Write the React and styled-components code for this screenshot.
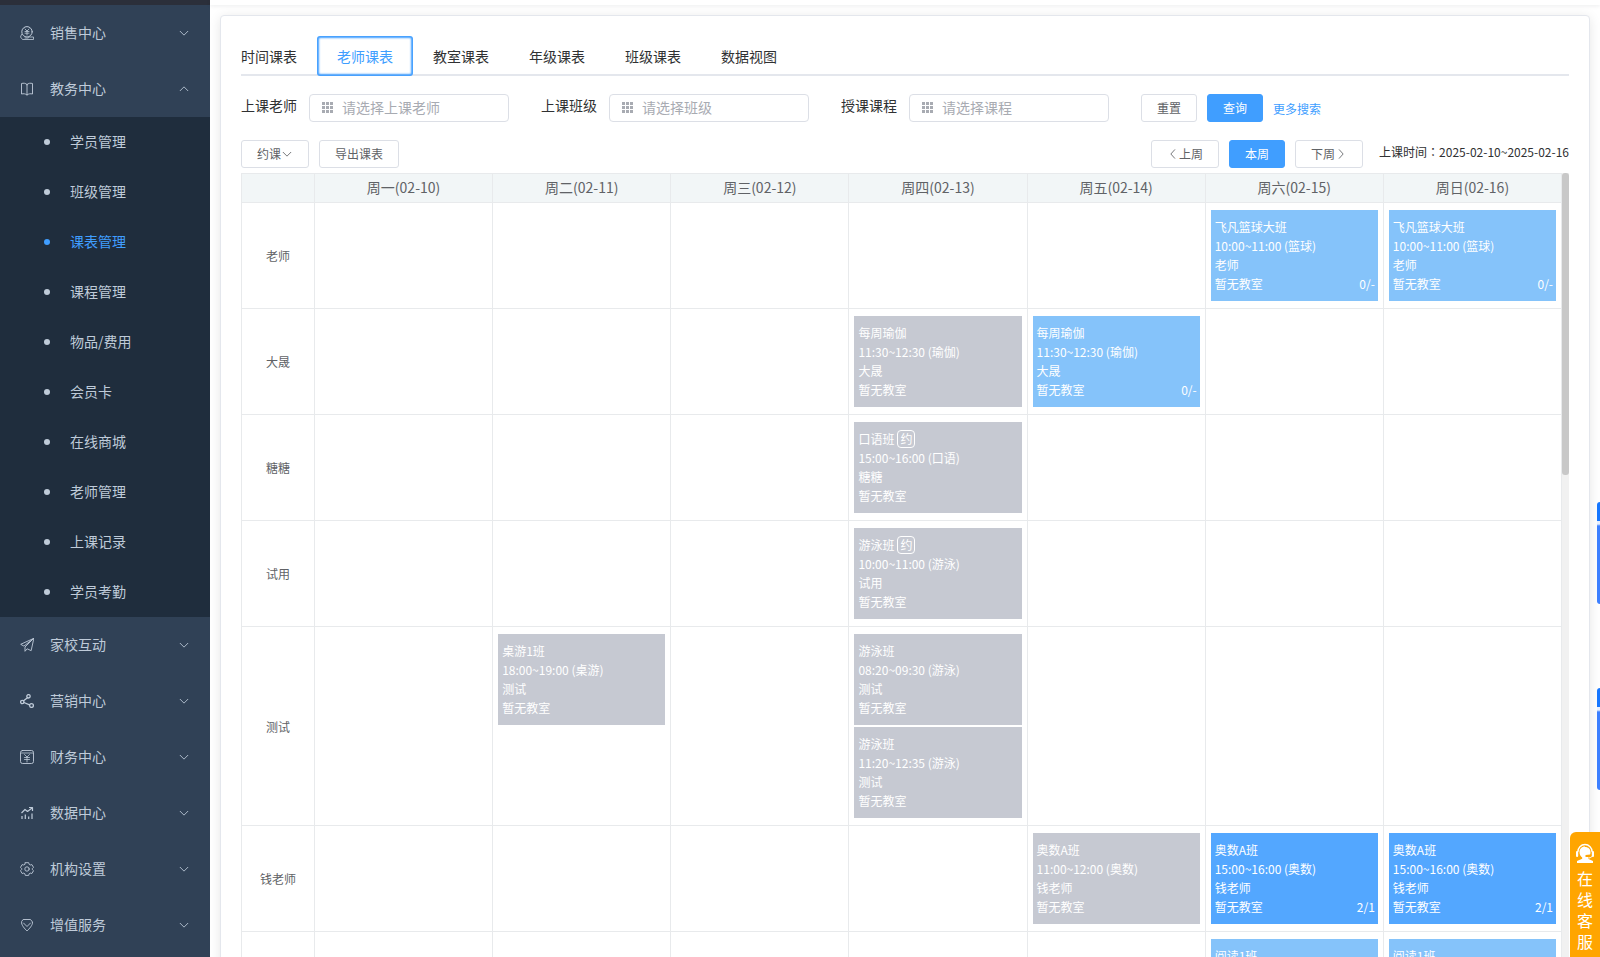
import { useState } from "react";
import styled, { createGlobalStyle, css } from "styled-components";

const GlobalStyle = createGlobalStyle`
  * {
    box-sizing: border-box;
  }
  body {
    margin: 0;
    background: #fff;
    color: #303133;
    font-family: "Noto Sans CJK SC", sans-serif;
    font-size: 14px;
  }
  button, input {
    font: inherit;
  }
`;

const Layout = styled.div`
  display: flex;
  height: 100vh;
  overflow: hidden;
`;

/* sidebar */
const Sidebar = styled.nav`
  flex: 0 0 210px;
  background: #304156;
  border-top: 5px solid #2b2f3a;
  overflow: hidden;
`;
const MenuTitle = styled.button`
  display: flex;
  align-items: center;
  width: 100%;
  height: 56px;
  padding: 0 20px;
  border: 0;
  background: none;
  color: #bfcbd9;
  text-align: left;
  cursor: pointer;
  & > span {
    flex: 1;
    margin-left: 16px;
    padding-bottom: 2px;
  }
`;
const SubMenu = styled.ul`
  margin: 0;
  padding: 0;
  list-style: none;
  background: #1f2d3d;
`;
const SubLink = styled.a`
  display: flex;
  align-items: center;
  gap: 20px;
  height: 50px;
  padding-left: 44px;
  color: ${(p) => (p.$active ? "#409eff" : "#bfcbd9")};
  text-decoration: none;
  &::before {
    content: "";
    width: 6px;
    height: 6px;
    border-radius: 50%;
    background: currentColor;
  }
  & > span {
    padding-bottom: 2px;
  }
`;

/* main */
const Main = styled.main`
  flex: 1;
  min-width: 0;
`;
const Header = styled.header`
  height: 5px;
  background: #fff;
  box-shadow: 0 1px 4px rgba(0, 21, 41, 0.08);
`;
const Card = styled.section`
  margin: 10px 10px 0;
  min-height: 100vh;
  padding: 20px;
  border: 1px solid #e4e7ed;
  border-radius: 4px;
  background: #fff;
  box-shadow: 0 2px 12px rgba(0, 0, 0, 0.1);
`;
const Tabs = styled.div`
  display: flex;
  height: 40px;
  background: linear-gradient(#e4e7ed, #e4e7ed) bottom / 100% 2px no-repeat;
`;
const Tab = styled.button`
  height: 40px;
  padding: 0 20px;
  border: 0;
  background: none;
  color: #303133;
  line-height: 40px;
  cursor: pointer;
  &:first-child {
    padding-left: 0;
  }
  ${(p) =>
    p.$active &&
    css`
      color: #409eff;
      border-radius: 3px;
      box-shadow: inset 0 0 2px 2px #409eff;
    `}
`;
const Filters = styled.form`
  display: flex;
  gap: 32px;
  margin-top: 18px;
`;
const Field = styled.div`
  display: flex;
`;
const FieldLabel = styled.label`
  width: 68px;
  line-height: 22px;
`;
const InputBox = styled.div`
  display: flex;
  align-items: center;
  gap: 8px;
  width: 200px;
  height: 28px;
  padding: 0 11px;
  border: 1px solid #dcdfe6;
  border-radius: 4px;
`;
const Input = styled.input`
  flex: 1;
  min-width: 0;
  padding: 0 0 2px;
  border: 0;
  outline: 0;
  color: #606266;
  &::placeholder {
    color: #a8abb2;
  }
`;
const Actions = styled.div`
  display: flex;
  align-items: center;
  gap: 10px;
`;
const Button = styled.button`
  display: flex;
  align-items: center;
  height: 28px;
  padding: 0 15px;
  border: 1px solid ${(p) => (p.$primary ? "#409eff" : "#dcdfe6")};
  border-radius: 3px;
  background: ${(p) => (p.$primary ? "#409eff" : "#fff")};
  color: ${(p) => (p.$primary ? "#fff" : "#606266")};
  font-size: 12px;
  line-height: 26px;
  white-space: nowrap;
  cursor: pointer;
`;
const MoreLink = styled.a`
  color: #409eff;
  font-size: 12px;
  text-decoration: none;
`;
const Toolbar = styled.div`
  display: flex;
  justify-content: space-between;
  margin: 18px 0 5px;
`;
const DateRange = styled.span`
  align-self: flex-start;
  margin-left: 6px;
  font-size: 12px;
  line-height: 24px;
`;
/* the TC face sets the full-width colon in the middle of its cell */
const Colon = styled.span`
  font-family: "Noto Sans CJK TC", sans-serif;
`;

/* timetable */
const TableWrap = styled.div`
  display: flex;
`;
const Scrollbar = styled.div`
  flex: 0 0 7px;
  background: #f1f1f1;
  &::before {
    content: "";
    display: block;
    height: 302px;
    border-radius: 3px;
    background: #c8c8c8;
  }
`;
const Table = styled.table`
  flex: 1;
  width: 100%;
  border-collapse: collapse;
  table-layout: fixed;
  color: #606266;
  th, td {
    border: 1px solid #e8eaec;
  }
  thead th {
    height: 29px;
    padding: 0 0 2px;
    background: #f2f6f7;
    font-weight: 400;
    line-height: 26px;
  }
  thead th:first-child {
    width: 73px;
  }
  tbody th {
    padding: 0;
    font-size: 12px;
    font-weight: 400;
  }
  td {
    height: 106px;
    padding: 7px 5px;
    vertical-align: top;
  }
`;
const cardColors = {
    past: "#c6c9d2",
    open: "#85c3fa",
    booked: "#53a7ff",
};
const Lesson = styled.div`
  min-height: 91px;
  padding: 7px 3px 8px 4px;
  background: ${(p) => cardColors[p.$status]};
  color: #fff;
  font-size: 12px;
  line-height: 19px;
  & + & {
    margin-top: 2px;
  }
`;
const LessonLine = styled.div`
  display: flex;
  align-items: center;
  height: 19px;
  white-space: nowrap;
`;
const Count = styled.span`
  margin-left: auto;
`;
const BookTag = styled.span`
  width: 18px;
  height: 18px;
  margin-left: 3px;
  border: 1px solid #fff;
  border-radius: 4px;
  line-height: 16px;
  text-align: center;
`;

/* things that stick to the right edge of the window */
const SideHandle = styled.div`
  position: fixed;
  right: 0;
  top: ${(p) => p.$top}px;
  width: 3px;
  height: 102px;
  border-radius: 3px 0 0 3px;
  background: linear-gradient(#1677ff 19px, #e6efff 19px, #e6efff 22px, #3d80ff 24px);
`;
const Service = styled.button`
  position: fixed;
  right: 0;
  top: 832px;
  display: flex;
  flex-direction: column;
  align-items: center;
  width: 30px;
  height: 140px;
  padding: 11px 7px;
  border: 0;
  border-radius: 6px 0 0 6px;
  background: #ffa500;
  color: #fff;
  font-size: 16px;
  line-height: 21px;
  cursor: pointer;
  svg {
    flex: none;
    margin-bottom: 5px;
  }
`;

const Icon = ({ size = 14, children }) => (
    <svg width={size} height={size} viewBox="0 0 14 14" fill="none" stroke="currentColor" strokeLinecap="round" strokeLinejoin="round" aria-hidden="true">
        {children}
    </svg>
);
const arrows = {
    down: "M2.500 5L7 9.500 11.500 5",
    up: "M2.500 9L7 4.500 11.500 9",
    left: "M9 2L4.500 7 9 12",
    right: "M5 2l4.500 5L5 12",
};
const Arrow = ({ dir }) => <Icon size={12}><path d={arrows[dir]} /></Icon>;
const GridIcon = () => (
    <svg width="13" height="12" viewBox="0 0 13 12" fill="#a8abb2" aria-hidden="true">
        {[0, 4, 8].map((y) => [1, 5, 9].map((x) => <rect key={x + "-" + y} x={x} y={y} width="3" height="3" />))}
    </svg>
);
const icons = {
    sales: <><circle cx="7" cy="5.800" r="5.200" /><path d="M5 3l2 2 2-2M7 5v4M5 5.500h4M5 7.200h4M1.500 8.500L.5 11l2 2.500h11v-2.500h-4L8 12H5" strokeWidth=".8" /></>,
    book: <path d="M7 2.500C5.500 1 3.500 1 1.500 1.500v10.500c2-.5 4-.3 5.500 1 1.500-1.300 3.500-1.500 5.500-1V1.500C10.500 1 8.500 1 7 2.500zM7 2.500V13" strokeWidth=".9" />,
    send: <path d="M13.500.5L.7 6.300l3.200 1.800L13.500.5 5 9v4.300l2.200-2.500 3.600 1.700z" strokeWidth=".9" />,
    share: <g strokeWidth="1.300"><circle cx="8.500" cy="2.300" r="1.700" /><circle cx="2.300" cy="8" r="1.700" /><circle cx="11.500" cy="11.500" r="1.900" /><path d="M7.500 3.700L3.600 6.800M4 8.500l5.500 2.300" /></g>,
    finance: <><rect x=".5" y=".5" width="13" height="13" rx="2" strokeWidth=".9" /><path d="M1 3h12M4.500 4.500L7 7l2.500-2.500M7 7v5M4.500 7.500h5M4.500 9.500h5" strokeWidth=".8" /></>,
    chart: <path d="M1.500 7L5 3.500l2.500 2L12 2M9 1.500h3.500V5M2 13v-3M5.300 13V8.500M8.700 13v-2.500M12 13V7.500" strokeLinecap="butt" strokeWidth="1.200" />,
    setting: <><path d="M5.300.7h3.400l.5 1.700 1 .6 1.700-.4 1.600 2.800-1.200 1.200v.9l1.200 1.200-1.600 2.800-1.700-.4-1 .6-.5 1.700H5.300l-.5-1.700-1-.6-1.700.4L.5 8.700l1.200-1.200v-.9L.5 5.400l1.600-2.800 1.700.4 1-.6z" strokeWidth=".9" /><circle cx="7" cy="7" r="2.200" strokeWidth=".9" /></>,
    vip: <><path d="M3.500 1.500h7l2 2.500c.5 3-3.500 7-5.500 9-2-2-6-6-5.500-9z" strokeWidth=".9" /><path d="M3.500 5L7 8.500 10.500 5" strokeWidth=".9" /></>,
};

const subItems = ["学员管理", "班级管理", "课表管理", "课程管理", "物品/费用", "会员卡", "在线商城", "老师管理", "上课记录", "学员考勤"];
const menu = [
    { title: "销售中心", icon: "sales" },
    { title: "教务中心", icon: "book", children: subItems },
    { title: "家校互动", icon: "send" },
    { title: "营销中心", icon: "share" },
    { title: "财务中心", icon: "finance" },
    { title: "数据中心", icon: "chart" },
    { title: "机构设置", icon: "setting" },
    { title: "增值服务", icon: "vip" },
];
const tabs = ["时间课表", "老师课表", "教室课表", "年级课表", "班级课表", "数据视图"];
const filters = [
    { id: "teacher", label: "上课老师", placeholder: "请选择上课老师" },
    { id: "class", label: "上课班级", placeholder: "请选择班级" },
    { id: "course", label: "授课课程", placeholder: "请选择课程" },
];
const days = ["周一(02-10)", "周二(02-11)", "周三(02-12)", "周四(02-13)", "周五(02-14)", "周六(02-15)", "周日(02-16)"];

const basketball = { name: "飞凡篮球大班", time: "10:00~11:00 (篮球)", status: "open", count: "0/-" };
const yoga = { name: "每周瑜伽", time: "11:30~12:30 (瑜伽)" };
const math = { name: "奥数A班", time: "15:00~16:00 (奥数)", status: "booked", count: "2/1" };
const reading = { name: "阅读1班", status: "open" };
// lessons are keyed by the index of the day
const rows = [
    { teacher: "老师", lessons: { 5: [basketball], 6: [basketball] } },
    { teacher: "大晟", lessons: { 3: [{ ...yoga, status: "past" }], 4: [{ ...yoga, status: "open", count: "0/-" }] } },
    { teacher: "糖糖", lessons: { 3: [{ name: "口语班", time: "15:00~16:00 (口语)", status: "past", bookable: true }] } },
    { teacher: "试用", lessons: { 3: [{ name: "游泳班", time: "10:00~11:00 (游泳)", status: "past", bookable: true }] } },
    {
        teacher: "测试",
        lessons: {
            1: [{ name: "桌游1班", time: "18:00~19:00 (桌游)", status: "past" }],
            3: [
                { name: "游泳班", time: "08:20~09:30 (游泳)", status: "past" },
                { name: "游泳班", time: "11:20~12:35 (游泳)", status: "past" },
            ],
        },
    },
    { teacher: "钱老师", lessons: { 4: [{ name: "奥数A班", time: "11:00~12:00 (奥数)", status: "past" }], 5: [math], 6: [math] } },
    { teacher: "", lessons: { 5: [reading], 6: [reading] } },
];

const LessonCard = ({ lesson, teacher }) => (
    <Lesson $status={lesson.status}>
        <LessonLine>
            {lesson.name}
            {lesson.bookable && <BookTag>约</BookTag>}
        </LessonLine>
        {lesson.time && (
            <>
                <LessonLine>{lesson.time}</LessonLine>
                <LessonLine>{teacher}</LessonLine>
                <LessonLine>
                    暂无教室
                    {lesson.count && <Count>{lesson.count}</Count>}
                </LessonLine>
            </>
        )}
    </Lesson>
);

const App = () => {
    const [tab, setTab] = useState("老师课表");
    const [open, setOpen] = useState("教务中心");
    return (
        <Layout>
            <GlobalStyle />
            <Sidebar>
                {menu.map((item) => (
                    <div key={item.title}>
                        <MenuTitle onClick={() => setOpen(open === item.title ? "" : item.title)}>
                            <Icon>{icons[item.icon]}</Icon>
                            <span>{item.title}</span>
                            <Arrow dir={open === item.title && item.children ? "up" : "down"} />
                        </MenuTitle>
                        {item.children && open === item.title && (
                            <SubMenu>
                                {item.children.map((name) => (
                                    <li key={name}>
                                        <SubLink href="#" $active={name === "课表管理"}><span>{name}</span></SubLink>
                                    </li>
                                ))}
                            </SubMenu>
                        )}
                    </div>
                ))}
            </Sidebar>
            <Main>
                <Header />
                <Card>
                    <Tabs>
                        {tabs.map((name) => (
                            <Tab key={name} $active={name === tab} onClick={() => setTab(name)}>{name}</Tab>
                        ))}
                    </Tabs>
                    <Filters onSubmit={(e) => e.preventDefault()}>
                        {filters.map((f) => (
                            <Field key={f.id}>
                                <FieldLabel htmlFor={f.id}>{f.label}</FieldLabel>
                                <InputBox>
                                    <GridIcon />
                                    <Input id={f.id} placeholder={f.placeholder} />
                                </InputBox>
                            </Field>
                        ))}
                        <Actions>
                            <Button type="reset">重置</Button>
                            <Button type="submit" $primary>查询</Button>
                            <MoreLink href="#">更多搜索</MoreLink>
                        </Actions>
                    </Filters>
                    <Toolbar>
                        <Actions>
                            <Button>约课<Arrow dir="down" /></Button>
                            <Button>导出课表</Button>
                        </Actions>
                        <Actions>
                            <Button><Arrow dir="left" />上周</Button>
                            <Button $primary>本周</Button>
                            <Button>下周<Arrow dir="right" /></Button>
                            <DateRange>上课时间<Colon>：</Colon>2025-02-10~2025-02-16</DateRange>
                        </Actions>
                    </Toolbar>
                    <TableWrap>
                        <Table>
                            <thead>
                                <tr>
                                    <th />
                                    {days.map((day) => <th key={day}>{day}</th>)}
                                </tr>
                            </thead>
                            <tbody>
                                {rows.map((row) => (
                                    <tr key={row.teacher}>
                                        <th>{row.teacher}</th>
                                        {days.map((day, i) => (
                                            <td key={day}>
                                                {(row.lessons[i] || []).map((lesson) => (
                                                    <LessonCard key={lesson.name + lesson.time} lesson={lesson} teacher={row.teacher} />
                                                ))}
                                            </td>
                                        ))}
                                    </tr>
                                ))}
                            </tbody>
                        </Table>
                        <Scrollbar />
                    </TableWrap>
                </Card>
            </Main>
            <SideHandle $top={502} />
            <SideHandle $top={688} />
            <Service>
                <svg width="18" height="20" viewBox="0 0 18 20" fill="#fff" aria-hidden="true">
                    <path d="M1.800 9a7.200 7.500 0 0 1 14.400 0" fill="none" stroke="#fff" strokeWidth="1.400" />
                    <rect y="8" width="2.200" height="6" rx="1.100" />
                    <rect x="15.800" y="8" width="2.200" height="6" rx="1.100" />
                    <path d="M9 3.500c-3.500 0-5.500 2.500-5.500 5.500 0 2.500 1 4.500 2.700 5.600v1.200L1 18v2h16v-2l-5-2.200v-1.200l1-.7-3.500.2v-2l4.600-.6c.3-.7.4-1.500.4-2.300 0-3-2-5.200-5.500-5.200z" />
                    <path d="M16.500 13c-1 1.500-3 2.200-5.500 2.200" fill="none" stroke="#fff" />
                </svg>
                <span>在线客服</span>
            </Service>
        </Layout>
    );
};
export default App;
